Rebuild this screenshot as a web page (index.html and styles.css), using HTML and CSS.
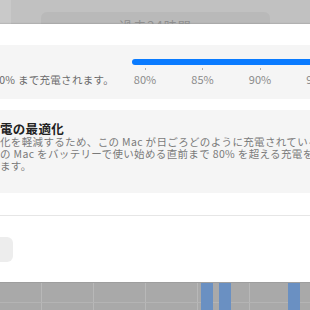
FILE: index.html
```html
<!DOCTYPE html>
<html lang="ja">
<head>
  <meta charset="UTF-8" />
  <title>バッテリー</title>
  <link rel="stylesheet" href="styles.css">
</head>
<body>

  <div class="backdrop">
    <div class="range-pill">過去24時間</div>
  </div>

  <div class="sheet">
    <section class="limit-row">
      <p class="limit-text">90% まで充電されます。</p>
      <div class="slider">
        <div class="slider-track"></div>
        <div class="ticks">
          <div class="tick"><span class="dot"></span>80%</div>
          <div class="tick"><span class="dot"></span>85%</div>
          <div class="tick"><span class="dot"></span>90%</div>
          <div class="tick"><span class="dot"></span>95%</div>
        </div>
      </div>
    </section>

    <section class="optimize-box">
      <h3>電の最適化</h3>
      <p class="desc">化を軽減するため、この Mac が日ごろどのように充電されているかを学習し、<br>の Mac をバッテリーで使い始める直前まで 80% を超える充電を保留<br>ます。</p>
    </section>

    <hr class="divider">

    <div class="button-row">
      <button class="side-button">オプション</button>
    </div>
  </div>

  <div class="graph">
    <span class="bar" style="left:201px"></span>
    <span class="bar" style="left:219px"></span>
    <span class="bar" style="left:288px"></span>
  </div>

</body>
</html>
```

FILE: styles.css
```css
body {
  font-family: "Noto Sans CJK JP", "Noto Sans", sans-serif;
  margin: 0;
  width: 310px;
  height: 310px;
  overflow: hidden;
  background: #c3c3c3;
}

.backdrop {
  height: 24px;
  overflow: hidden;
  padding-left: 41px;
  background: linear-gradient(to right, #c9c9c9 0, #c9c9c9 11px, #c1c1c1 11px);
}

.range-pill {
  width: 229px;
  height: 30px;
  margin-top: 12px;
  padding-top: 4px;
  box-sizing: border-box;
  background: #b9b9b9;
  border-radius: 6px;
  color: #8f8f8f;
  font-size: 13px;
  text-align: center;
  letter-spacing: 1px;
}

.sheet {
  height: 258px;
  background: white;
  padding-top: 21px;
  box-sizing: border-box;
  overflow: hidden;
  box-shadow: 0 -1px 1px rgba(0, 0, 0, 0.08);
}

.limit-row {
  display: grid;
  grid-template-columns: 132px 1fr;
  height: 54px;
  background: #f5f5f5;
  overflow: hidden;
}

.limit-text {
  margin: 27px 0 0 -7px;
  font-size: 10.5px;
  color: #6a6a6a;
  white-space: nowrap;
  letter-spacing: 0.3px;
}

.slider-track {
  margin-top: 14px;
  width: 200px;
  height: 6px;
  border-radius: 3px;
  background: #0a7bff;
}

.ticks {
  display: flex;
  gap: 33.5px;
  margin-left: 1px;
}

.tick {
  width: 24px;
  display: flex;
  flex-direction: column;
  align-items: center;
  font-size: 11px;
  color: #8b8b8b;
  white-space: nowrap;
  line-height: 13px;
}

.dot {
  width: 1px;
  height: 2px;
  margin: 3px 0 3px;
  background: #b0b0b0;
}

.optimize-box {
  margin-top: 11px;
  height: 83px;
  background: #f5f5f5;
  padding-top: 11px;
  box-sizing: border-box;
  overflow: hidden;
  white-space: nowrap;
}

.optimize-box h3 {
  margin: 0;
  font-size: 12.5px;
  line-height: 15px;
  color: #222;
  letter-spacing: 0.3px;
}

.desc {
  margin: 0;
  font-size: 10.5px;
  line-height: 12px;
  color: #7a7a7a;
  letter-spacing: 0.35px;
}

.divider {
  margin: 22px 0 0;
  border: none;
  border-top: 1px solid #e6e6e6;
}

.button-row {
  margin-top: 21px;
  margin-left: -40px;
}

.side-button {
  width: 53px;
  height: 25px;
  border: none;
  border-radius: 6px;
  background: #ededed;
  color: transparent;
  font-size: 11px;
}

.graph {
  position: relative;
  height: 28px;
  border-top: 1px solid #9e9e9e;
  background:
    linear-gradient(to bottom, transparent 19px, #b4b4b4 19px, #b4b4b4 20px, transparent 20px),
    repeating-linear-gradient(to right, transparent 0, transparent 41px, #b8b8b8 41px, #b8b8b8 42px, transparent 42px, transparent 52px),
    #a9a9a9;
  background-position: 0 0, -52px 0, 0 0;
}

.bar {
  position: absolute;
  top: 0;
  bottom: 0;
  width: 12px;
  background: #6a90c2;
}
```
